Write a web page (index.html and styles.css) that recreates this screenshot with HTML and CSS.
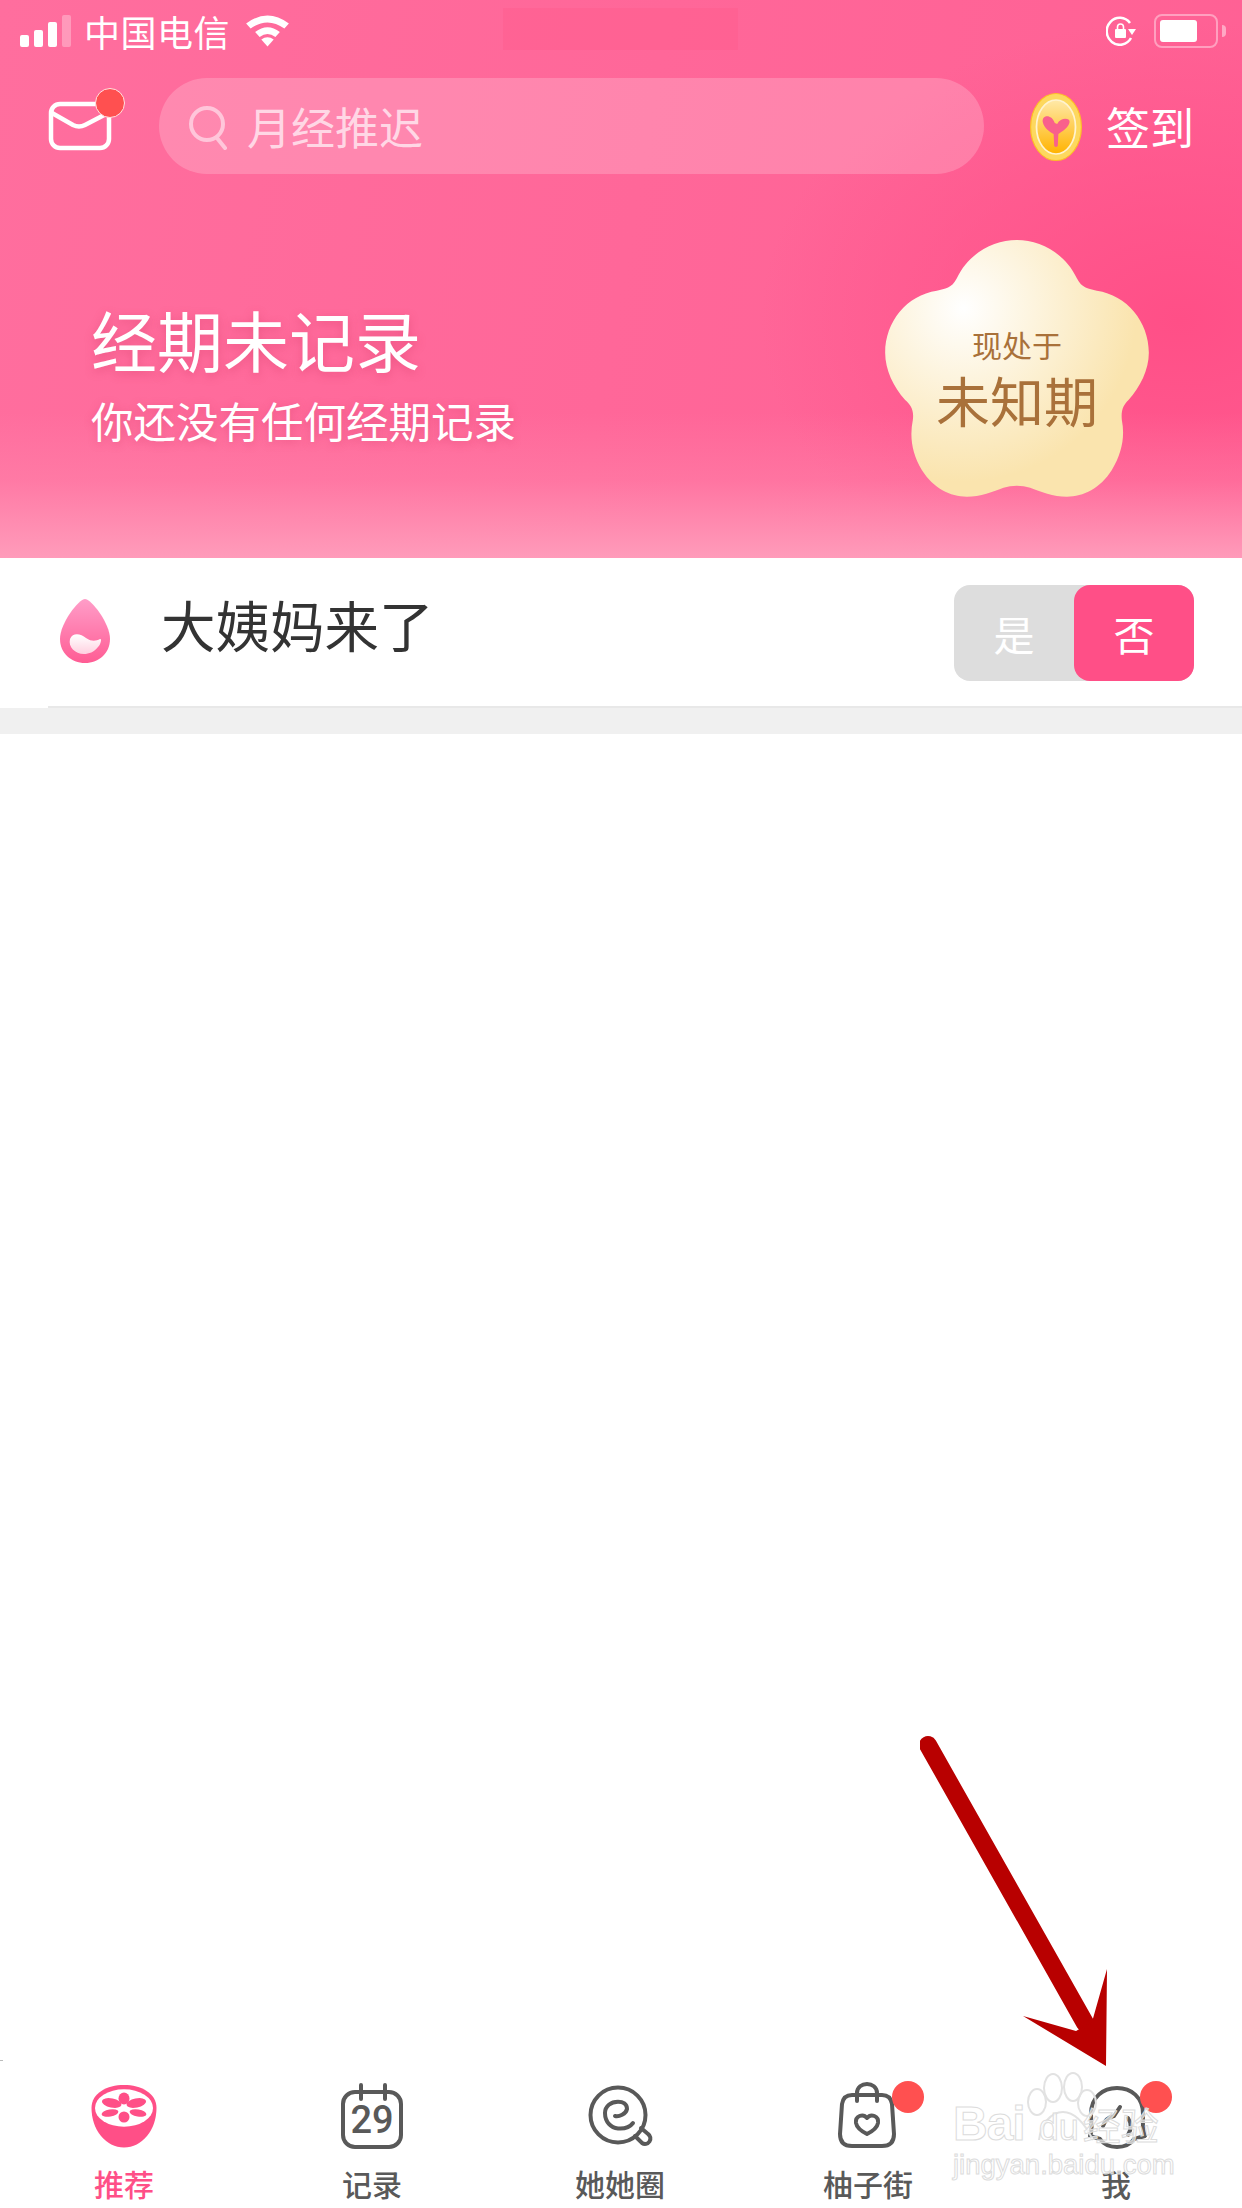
FILE: index.html
```html
<!DOCTYPE html>
<html lang="zh-CN">

<head>
    <meta charset="UTF-8">
    <meta name="viewport" content="width=device-width, initial-scale=1.0">
    <title>美柚</title>
    <link rel="stylesheet" href="styles.css">
</head>

<body>
    <div class="page">
        <div class="hero">
            <div class="status-mask"></div>
            <div class="status-bar">
                <div class="status-left">
                    <div class="signal">
                        <span class="bar bar-1"></span>
                        <span class="bar bar-2"></span>
                        <span class="bar bar-3"></span>
                        <span class="bar bar-4"></span>
                    </div>
                    <span class="carrier">中国电信</span>
                    <svg class="wifi" width="45" height="34" viewBox="0 0 40 34" preserveAspectRatio="none">
                        <path d="M1 10.500 Q20 -5.500 39 10.500 L35 15.500 Q20 3.500 5 15.500 Z" fill="#fff" />
                        <path d="M9 19 Q20 9.500 31 19 L27 24 Q20 18 13 24 Z" fill="#fff" />
                        <path d="M14.500 26.500 Q20 22 25.500 26.500 L20 33.500 Z" fill="#fff" />
                    </svg>
                </div>
                <div class="status-right">
                    <svg width="30" height="30" viewBox="0 0 30 30">
                        <path d="M25 22 A13 13.500 0 1 1 24 7" fill="none" stroke="#fff" stroke-width="2.500" />
                        <path d="M22 13 L30 13 L26 19 Z" fill="#fff" />
                        <rect x="9" y="13" width="11" height="9" rx="1" fill="#fff" />
                        <path d="M11.500 14 V11 a3 3 0 0 1 6 0 V14" fill="none" stroke="#fff" stroke-width="1.600" />
                    </svg>
                    <div class="battery">
                        <div class="battery-level"></div>
                    </div>
                    <span class="battery-nub"></span>
                </div>
            </div>

            <div class="top-row">
                <div class="mail">
                    <svg width="64" height="50" viewBox="0 0 64 50">
                        <rect x="3" y="3" width="58" height="44" rx="9" fill="none" stroke="#fff" stroke-width="4.500" />
                        <path d="M4 12 L25 24 Q31 27 37 24 L60 12" fill="none" stroke="#fff" stroke-width="4.500" />
                    </svg>
                    <span class="mail-dot"></span>
                </div>
                <div class="search">
                    <svg width="38" height="46" viewBox="0 0 38 46">
                        <circle cx="18" cy="19" r="16" fill="none" stroke="#ffc6da" stroke-width="4" />
                        <path d="M28 33 L36 43" stroke="#ffc6da" stroke-width="4" stroke-linecap="round" />
                    </svg>
                    <span class="search-text">月经推迟</span>
                </div>
                <div class="sign-in">
                    <svg width="52" height="68" viewBox="0 0 44 68" preserveAspectRatio="none">
                        <defs>
                            <linearGradient id="coinFace" x1="0" y1="0" x2="0" y2="1">
                                <stop offset="0" stop-color="#ffe9a8" />
                                <stop offset="1" stop-color="#ffb300" />
                            </linearGradient>
                        </defs>
                        <ellipse cx="22" cy="34" rx="21.500" ry="33.500" fill="#fdd85e" stroke="#fdbf24" />
                        <ellipse cx="22" cy="34" rx="16.500" ry="27" fill="url(#coinFace)" stroke="#fff3cf" stroke-width="1.500" />
                        <path d="M21 30 C18 20 9 22 11 30 C12 35 17 39 20 41 L20.500 53 Q22 55 23.500 53 L24 41 C28 38 33 34 33.500 29 C34 25 26 24 23 31 Z" fill="#f9608c" />
                    </svg>
                    <span class="sign-in-text">签到</span>
                </div>
            </div>

            <div class="hero-body">
                <div class="hero-info">
                    <h1 class="hero-title">经期未记录</h1>
                    <p class="hero-sub">你还没有任何经期记录</p>
                </div>
                <div class="flower">
                    <svg class="flower-bg" width="264" height="257" viewBox="135 60 791 771">
                        <defs>
                            <radialGradient id="flowerFill" gradientUnits="userSpaceOnUse" cx="370" cy="265" r="520">
                                <stop offset="0" stop-color="#ffffff" />
                                <stop offset="1" stop-color="#fae4ae" />
                            </radialGradient>
                        </defs>
                        <path d="M350 175 C385 100 460 60 530 60 C600 60 675 100 710 175 C725 205 745 207 770 212 C860 225 926 305 926 398 C926 450 900 500 865 540 C850 555 842 570 845 600 C855 650 845 700 815 750 C780 805 730 830 680 830 C640 830 600 815 570 803 C545 795 515 795 490 803 C460 815 420 830 380 830 C330 830 280 805 245 750 C215 700 208 650 218 600 C222 570 212 555 195 540 C160 500 135 450 135 398 C135 305 200 225 290 212 C315 207 335 205 350 175 Z" fill="url(#flowerFill)" />
                    </svg>
                    <span class="flower-small">现处于</span>
                    <span class="flower-big">未知期</span>
                </div>
            </div>
        </div>

        <div class="period-row">
            <div class="period-inner">
                <svg width="52" height="66" viewBox="0 0 52 66">
                    <defs>
                        <linearGradient id="dropFill" x1="0" y1="0" x2="0" y2="1">
                            <stop offset="0" stop-color="#ff9dc8" />
                            <stop offset="1" stop-color="#ff5c94" />
                        </linearGradient>
                        <linearGradient id="dropInner" x1="0" y1="0" x2="0" y2="1">
                            <stop offset="0" stop-color="#ffffff" />
                            <stop offset="1" stop-color="#ffd0e0" />
                        </linearGradient>
                    </defs>
                    <path d="M26 1 C32 1 51 25 51 41 C51 55 40 65 26 65 C12 65 1 55 1 41 C1 25 20 1 26 1 Z" fill="url(#dropFill)" />
                    <path d="M11 41 C14 34 22 36 27 40 C33 44 37 43 41 41 C43 40 42 46 39 49 C35 54 30 56 25 56 C16 56 9 49 11 41 Z" fill="url(#dropInner)" />
                </svg>
                <span class="period-text">大姨妈来了</span>
                <div class="toggle">
                    <span class="toggle-btn">是</span>
                    <span class="toggle-btn toggle-on">否</span>
                </div>
            </div>
        </div>

        <div class="gap"></div>
        <div class="content"></div>

        <div class="tabbar">
            <div class="tab tab-active">
                <svg width="80" height="72" viewBox="0 0 80 72">
                    <path d="M7.500 28 C7.500 13 23 5 40 5 C57 5 72.500 13 72.500 28 C72.500 50 58 67.500 40 67.500 C22 67.500 7.500 50 7.500 28 Z" fill="#ff4f87" />
                    <ellipse cx="40" cy="28" rx="29" ry="18.700" fill="#fff" />
                    <ellipse cx="40" cy="18.500" rx="5.500" ry="6" fill="#ff4f87" />
                    <ellipse cx="40" cy="37" rx="5.500" ry="5.500" fill="#ff4f87" />
                    <ellipse cx="27.700" cy="23" rx="10" ry="4.500" fill="#ff4f87" transform="rotate(12 27.700 23)" />
                    <ellipse cx="52.300" cy="23" rx="10" ry="4.500" fill="#ff4f87" transform="rotate(-12 52.300 23)" />
                    <ellipse cx="26" cy="33" rx="8.500" ry="3.500" fill="#ff4f87" transform="rotate(-10 26 33)" />
                    <ellipse cx="54" cy="33" rx="8.500" ry="3.500" fill="#ff4f87" transform="rotate(10 54 33)" />
                </svg>
                <span class="tab-label">推荐</span>
            </div>
            <div class="tab">
                <svg width="80" height="72" viewBox="0 0 80 72">
                    <rect x="11" y="12" width="58" height="55" rx="12" fill="none" stroke="#595959" stroke-width="4" />
                    <path d="M29 5 V19 M53 5 V19" stroke="#595959" stroke-width="4" stroke-linecap="round" />
                    <text class="cal-day" x="40" y="53" text-anchor="middle">29</text>
                </svg>
                <span class="tab-label">记录</span>
            </div>
            <div class="tab">
                <svg width="80" height="72" viewBox="0 0 80 72">
                    <circle cx="38" cy="35" r="27.500" fill="none" stroke="#595959" stroke-width="4" />
                    <path d="M35 36 C39 37 46 34 47 29 C47 24 43 21.700 38 21.700 C31 21.700 25 26 25 33 C25 42 31 48 38 48.500 C44 49 50 47 53 43" fill="none" stroke="#595959" stroke-width="4" stroke-linecap="round" />
                    <path d="M55 56 L62 63 A5 5 0 0 0 68 54 L61 48" fill="none" stroke="#595959" stroke-width="4" stroke-linecap="round" />
                </svg>
                <span class="tab-label">她她圈</span>
            </div>
            <div class="tab">
                <svg width="80" height="72" viewBox="0 0 80 72">
                    <path d="M24 15 H54 C60 15 63 18 64 24 L66 54 C66 62 62 66 54 66 H24 C16 66 12 62 12 54 L14 24 C15 18 18 15 24 15 Z" fill="none" stroke="#595959" stroke-width="4" />
                    <path d="M29 21 V13 C29 1 49 1 49 13 V21" fill="none" stroke="#595959" stroke-width="4" stroke-linecap="round" />
                    <path d="M39 38 C43 33 51 36 50 43 C49 49 43 52 39 54 C35 52 29 49 28 43 C27 36 35 33 39 38 Z" fill="none" stroke="#595959" stroke-width="4" stroke-linejoin="round" />
                </svg>
                <span class="tab-dot"></span>
                <span class="tab-label">柚子街</span>
            </div>
            <div class="tab">
                <svg width="80" height="72" viewBox="0 0 80 72">
                    <path d="M14 56 C17 50 15 44 15 34 C15 17 27 8 41 8 C55 8 67 17 67 34 C67 44 66 50 69 56 L58 59 C54 65 47 67 41 67 C35 67 28 65 24 59 Z" fill="none" stroke="#595959" stroke-width="4" stroke-linejoin="round" />
                    <path d="M27 46 C29 39 33 37 38 36 L44 27" fill="none" stroke="#595959" stroke-width="4" stroke-linecap="round" />
                    <path d="M52 38 C56 44 55 50 52 55" fill="none" stroke="#595959" stroke-width="4" stroke-linecap="round" />
                </svg>
                <span class="tab-dot"></span>
                <span class="tab-label">我</span>
            </div>
        </div>

        <!-- arrow drawn over the screenshot -->
        <svg class="arrow" width="200" height="340" viewBox="0 0 200 340">
            <path d="M8 12 L165 290" stroke="#b80000" stroke-width="18" stroke-linecap="round" fill="none" />
            <path d="M187 236 L186 333 L103 283 L156 298 L172 289 Z" fill="#b80000" />
        </svg>

        <div class="watermark">
            <svg class="paw" width="100" height="84" viewBox="0 0 100 84">
                <g fill="none" stroke="#e2e2e2" stroke-width="2">
                    <ellipse cx="24" cy="38" rx="9" ry="13" />
                    <ellipse cx="40" cy="24" rx="9" ry="14" />
                    <ellipse cx="60" cy="23" rx="9" ry="14" />
                    <ellipse cx="74" cy="39" rx="9" ry="13" />
                    <path d="M26 76 C28 60 38 48 50 48 C62 48 72 60 80 76" />
                </g>
            </svg>
            <div class="wm-line">
                <span class="wm-bai">Bai</span>
                <span class="wm-du">du</span>
                <span class="wm-cn">经验</span>
            </div>
            <div class="wm-url">jingyan.baidu.com</div>
        </div>
    </div>
</body>

</html>
```

FILE: styles.css
```css
* {
    box-sizing: border-box;
}

body {
    margin: 0;
    background-color: white;
    font-family: "Noto Sans CJK SC", "Noto Sans", sans-serif;
}

.page {
    position: relative;
    width: 1242px;
    height: 2208px;
    display: flex;
    flex-direction: column;
    overflow: hidden;
    background-color: white;
}

/* Pink header */
.hero {
    position: relative;
    height: 558px;
    flex-shrink: 0;
    color: white;
    background:
        linear-gradient(180deg, rgba(255, 160, 190, 0) 74%, rgba(255, 150, 182, 0.3) 86%, rgba(255, 158, 188, 0.95) 100%),
        radial-gradient(ellipse 420px 300px at 1180px 320px, #ff4f87 0%, rgba(255, 79, 135, 0) 100%),
        linear-gradient(100deg, #ff6e9e 0%, #ff6094 100%);
}

/* smudge the screenshot has in the middle of the status bar */
.status-mask {
    position: absolute;
    left: 503px;
    top: 8px;
    width: 235px;
    height: 42px;
    background-color: rgba(255, 85, 135, 0.3);
}

.status-bar {
    position: relative;
    height: 58px;
    padding: 4px 16px 0 20px;
    display: flex;
    justify-content: space-between;
    align-items: center;
}

.status-left,
.status-right {
    display: flex;
    align-items: center;
}

.signal {
    display: flex;
    align-items: flex-end;
    gap: 5px;
    height: 32px;
}

.bar {
    width: 9px;
    background-color: white;
    border-radius: 2px;
}

.bar-1 { height: 12px; }
.bar-2 { height: 17px; }
.bar-3 { height: 25px; }
.bar-4 { height: 32px; background-color: rgba(255, 255, 255, 0.3); }

.carrier {
    margin-left: 13px;
    font-size: 36px;
    letter-spacing: 0.5px;
    line-height: 44px;
}

.wifi {
    margin-left: 15px;
    margin-top: -2px;
}

.battery {
    width: 64px;
    height: 34px;
    margin-left: 18px;
    padding: 4px;
    border: 2px solid rgba(255, 255, 255, 0.4);
    border-radius: 8px;
}

.battery-level {
    width: 37px;
    height: 22px;
    background-color: white;
    border-radius: 3px;
}

.battery-nub {
    width: 4px;
    height: 12px;
    margin-left: 4px;
    background-color: rgba(255, 255, 255, 0.45);
    border-radius: 0 6px 6px 0;
}

.top-row {
    position: relative;
    height: 96px;
    margin-top: 20px;
    display: flex;
    align-items: center;
}

.mail {
    position: relative;
    width: 64px;
    height: 50px;
    margin-left: 48px;
}

.mail svg {
    display: block;
}

.mail-dot {
    position: absolute;
    left: 47px;
    top: -13px;
    width: 30px;
    height: 30px;
    background-color: #ff5050;
    border: 1px solid #ffe3e3;
    border-radius: 50%;
}

.search {
    width: 825px;
    height: 96px;
    margin-left: 47px;
    padding-left: 30px;
    display: flex;
    align-items: center;
    background-color: rgba(255, 255, 255, 0.2);
    border-radius: 48px;
}

.search svg {
    margin-top: 4px;
}

.search-text {
    margin-left: 20px;
    font-size: 44px;
    color: #ffd7e5;
}

.sign-in {
    margin-left: 46px;
    display: flex;
    align-items: center;
}

.sign-in svg {
    margin-top: 1px;
}

.sign-in-text {
    margin-left: 24px;
    font-size: 44px;
    line-height: 52px;
}

.hero-body {
    position: relative;
    margin-top: 66px;
    padding: 0 93px 0 91px;
    display: flex;
    justify-content: space-between;
}

.hero-info {
    padding-top: 58px;
}

.hero-title {
    margin: 0;
    font-size: 66px;
    font-weight: normal;
    line-height: 80px;
    text-shadow: 0 3px 10px rgba(200, 50, 90, 0.35);
}

.hero-sub {
    margin: 16px 0 0;
    font-size: 42.5px;
    line-height: 52px;
    text-shadow: 0 2px 8px rgba(200, 50, 90, 0.35);
}

.flower {
    position: relative;
    width: 264px;
    height: 257px;
    padding-top: 84px;
    display: flex;
    flex-direction: column;
    align-items: center;
    color: #a9713a;
}

.flower-bg {
    position: absolute;
    left: 0;
    top: 0;
}

.flower-small {
    position: relative;
    font-size: 30px;
    line-height: 40px;
}

.flower-big {
    position: relative;
    font-size: 54px;
    line-height: 72px;
}

/* Period row */
.period-row {
    height: 150px;
    flex-shrink: 0;
    background-color: white;
}

.period-inner {
    height: 150px;
    margin-left: 48px;
    padding: 0 48px 0 11px;
    display: flex;
    align-items: center;
    border-bottom: 2px solid #e8e8e8;
}

.period-inner svg {
    margin-top: -2px;
}

.period-text {
    margin-left: 50px;
    margin-top: -17px;
    font-size: 54.5px;
    color: #333333;
}

.toggle {
    width: 240px;
    height: 96px;
    margin-left: auto;
    margin-top: 2px;
    display: flex;
    background-color: #dddddd;
    border-radius: 16px;
}

.toggle-btn {
    flex: 1;
    display: flex;
    justify-content: center;
    align-items: center;
    color: white;
    font-size: 41px;
}

.toggle-on {
    background-color: #ff4f87;
    border-radius: 16px;
}

.gap {
    height: 26px;
    flex-shrink: 0;
    background-color: #f0f0f0;
}

.content {
    flex: 1;
    background-color: white;
}

/* Bottom tabs */
.tabbar {
    position: relative;
    height: 148px;
    flex-shrink: 0;
    padding: 20px 2px 0 0;
    display: flex;
    background-color: white;
}

.tabbar::before {
    content: "";
    position: absolute;
    left: 0;
    top: 0;
    width: 3px;
    height: 1px;
    background-color: #bbbbbb;
}

.tab {
    position: relative;
    flex: 1;
    display: flex;
    flex-direction: column;
    align-items: center;
}

.tab svg {
    display: block;
}

.tab-label {
    margin-top: 13px;
    font-size: 30px;
    font-weight: 500;
    line-height: 36px;
    color: #595959;
}

.tab-active .tab-label {
    color: #ff4f87;
}

.cal-day {
    font-family: Roboto, sans-serif;
    font-size: 38px;
    font-weight: 500;
    fill: #595959;
}

.tab-dot {
    position: absolute;
    left: 148px;
    top: 1px;
    width: 32px;
    height: 32px;
    background-color: #ff5050;
    border-radius: 50%;
}

/* Overlays */
.arrow {
    position: absolute;
    left: 920px;
    top: 1733px;
}

.watermark {
    position: absolute;
    left: 953px;
    top: 2072px;
    width: 230px;
}

.paw {
    position: absolute;
    left: 60px;
    top: -8px;
}

.wm-line {
    position: relative;
    height: 74px;
    padding-top: 30px;
    display: flex;
    align-items: baseline;
    -webkit-text-stroke: 1px #dcdcdc;
    color: rgba(255, 255, 255, 0.65);
    font-family: "Liberation Sans", sans-serif;
}

.wm-bai {
    font-size: 48px;
    font-weight: bold;
    letter-spacing: -1px;
    line-height: 44px;
}

.wm-du {
    margin-left: 14px;
    font-size: 36px;
    line-height: 44px;
}

.wm-cn {
    margin-left: 4px;
    font-size: 38px;
    line-height: 44px;
    font-family: "Noto Sans CJK SC", sans-serif;
}

.wm-url {
    position: relative;
    margin-top: 2px;
    font-family: "Liberation Sans", sans-serif;
    font-size: 27.5px;
    line-height: 34px;
    white-space: nowrap;
    -webkit-text-stroke: 1px #dcdcdc;
    color: rgba(255, 255, 255, 0.65);
}
```
